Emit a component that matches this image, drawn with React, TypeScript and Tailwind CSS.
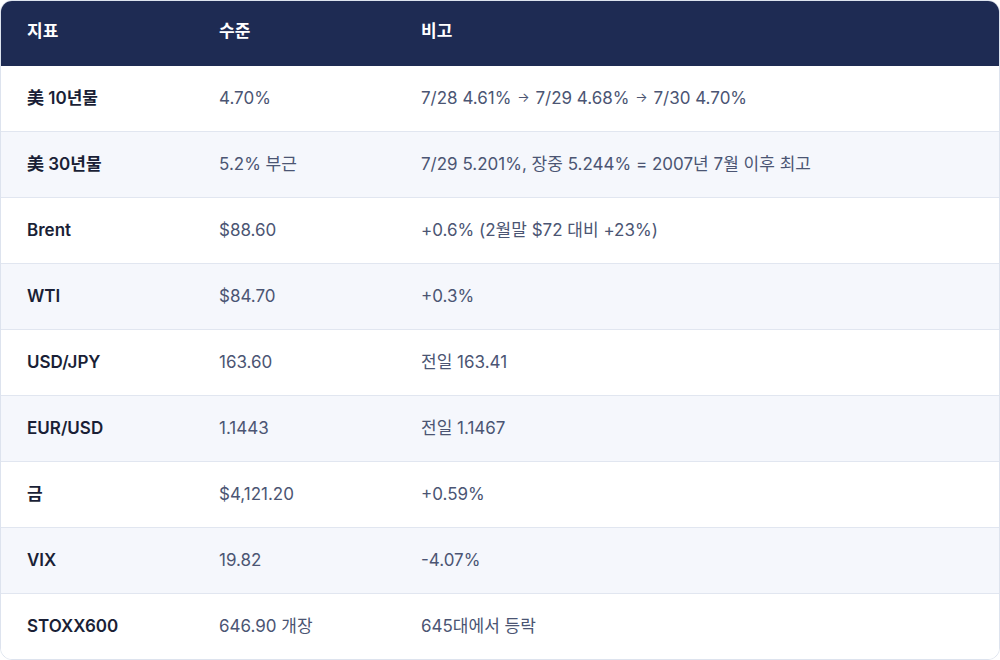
import React from "react";

const Arrow = () => <span className="text-[13px] px-[1px] relative top-[-2px]">→</span>;

const rows: [React.ReactNode, React.ReactNode, React.ReactNode][] = [
  ["美 10년물", "4.70%", <>7/28 4.61% <Arrow /> 7/29 4.68% <Arrow /> 7/30 4.70%</>],
  ["美 30년물", "5.2% 부근", "7/29 5.201%, 장중 5.244% = 2007년 7월 이후 최고"],
  ["Brent", "$88.60", "+0.6% (2월말 $72 대비 +23%)"],
  ["WTI", "$84.70", "+0.3%"],
  ["USD/JPY", "163.60", "전일 163.41"],
  ["EUR/USD", "1.1443", "전일 1.1467"],
  ["금", "$4,121.20", "+0.59%"],
  ["VIX", "19.82", "-4.07%"],
  ["STOXX600", "646.90 개장", "645대에서 등락"],
];

export default function App() {
  return (
    <div
      className="w-[1000px] h-[660px] bg-white"
      style={{ fontFamily: 'Inter, "Noto Sans CJK KR", sans-serif' }}
    >
      <div className="w-full h-full rounded-[12px] border border-[#dde3ee] overflow-hidden flex flex-col">
        <div className="h-[65px] shrink-0 bg-[#1e2b53] flex items-center text-white text-[17px] font-semibold pb-[3px]">
          <div className="w-[218px] shrink-0 pl-[26px]">지표</div>
          <div className="w-[202px] shrink-0">수준</div>
          <div className="flex-1">비고</div>
        </div>
        {rows.map((r, i) => (
          <div
            key={i}
            className={`flex-1 flex items-center text-[17px] ${i % 2 === 1 ? "bg-[#f5f7fc]" : "bg-white"} ${i < rows.length - 1 ? "border-b border-[#e1e6f0]" : ""}`}
          >
            <div className="w-[218px] shrink-0 pl-[26px] font-semibold text-[#1a1f36]">{r[0]}</div>
            <div className="w-[202px] shrink-0 text-[#4b5573]">{r[1]}</div>
            <div className="flex-1 text-[#4b5573]">{r[2]}</div>
          </div>
        ))}
      </div>
    </div>
  );
}
